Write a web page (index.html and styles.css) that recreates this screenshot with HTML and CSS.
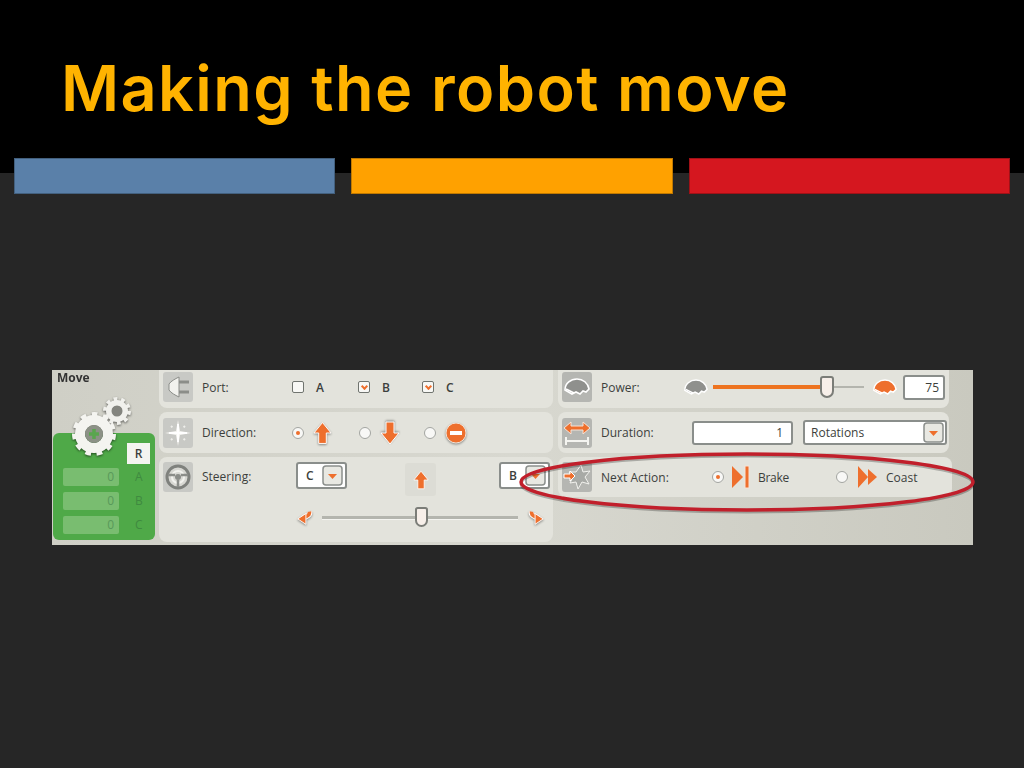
FILE: index.html
```html
<!DOCTYPE html>
<html lang="en">
<head>
    <meta charset="UTF-8">
    <title>Making the robot move</title>
    <link rel="stylesheet" href="styles.css">
</head>
<body>
    <svg class="defs" width="0" height="0">
        <symbol id="arrow" viewBox="0 0 20 24"><path d="M10 1 19 12H14V23H6V12H1Z" fill="#ee6f2d" stroke="#fff" stroke-width="1"/></symbol>
        <symbol id="fan" viewBox="0 0 28 20"><path d="M2 13C2 6 8 2 14 2 20 2 25 6 26 12L23 15 20 14 17 17 13 15 9 17Z" stroke="#fff" stroke-width="1.6"/><path d="M3 12 11 16" stroke="#fff" stroke-width="1.6"/></symbol>
        <symbol id="dropdown" viewBox="0 0 21 21"><rect x="1" y="1" width="19" height="19" rx="3" fill="#e8e8e2" stroke="#8b8f8c" stroke-width="1.5"/><path d="M6 9H15L10.5 14Z" fill="#ee6f2d"/></symbol>
        <symbol id="curve" viewBox="0 0 20 20"><path d="M15 3C16 8 11 8 8 10" fill="none" stroke="#fff" stroke-width="6"/><path d="M15 3C16 8 11 8 8 10" fill="none" stroke="#ee6f2d" stroke-width="4"/><path d="M2 11 11 5 11 17Z" fill="#ee6f2d" stroke="#fff"/></symbol>
    </svg>

    <header class="title-bar">
        <h1>Making the robot move</h1>
    </header>
    <div class="stripes">
        <div class="stripe blue"></div>
        <div class="stripe orange"></div>
        <div class="stripe red"></div>
    </div>

    <main class="panel">
        <section class="block-side">
            <div class="block-name">Move</div>
            <div class="green">
                <div class="reset">R</div>
                <div class="feedback"><span class="count">0</span><span class="port-letter">A</span></div>
                <div class="feedback"><span class="count">0</span><span class="port-letter">B</span></div>
                <div class="feedback"><span class="count">0</span><span class="port-letter">C</span></div>
            </div>
            <svg class="gears" width="100" height="70" viewBox="0 0 100 70">
                <circle cx="65" cy="14" r="8" fill="none" stroke="#f0f0ec" stroke-width="6"/>
                <circle cx="65" cy="14" r="12" fill="none" stroke="#f0f0ec" stroke-width="4" stroke-dasharray="3.77 3.77"/>
                <circle cx="65" cy="14" r="5.5" fill="#83847e"/>
                <circle cx="42" cy="37" r="14" fill="none" stroke="#f4f4f0" stroke-width="10"/>
                <circle cx="42" cy="37" r="19.5" fill="none" stroke="#f4f4f0" stroke-width="5" stroke-dasharray="5.57 5.57"/>
                <circle cx="42" cy="37" r="9" fill="#8c9186"/>
                <path d="M42 32V42M37 37H47" stroke="#5aa54f" stroke-width="3.5"/>
            </svg>
        </section>

        <section class="col col-left">
            <div class="row row-port">
                <div class="tile">
                    <svg width="26" height="26" viewBox="0 0 26 26"><path d="M14 8H24M14 18H24" stroke="#8b8d89" stroke-width="3"/><path d="M4 10C6 7 10 5 14 3V23C10 21 6 19 4 16Z" fill="#f2f2ee" stroke="#8b8d89"/></svg>
                </div>
                <span class="label label-left">Port:</span>
                <span class="check"></span><span class="opt opt-a">A</span>
                <span class="check on"></span><span class="opt opt-b">B</span>
                <span class="check on"></span><span class="opt">C</span>
            </div>
            <div class="row row-dir">
                <div class="tile">
                    <svg width="28" height="28" viewBox="0 0 28 28"><path d="M14 1 16 12 27 14 16 16 14 27 12 16 1 14 12 12Z" fill="#f4f4f0"/><path d="M14 5V23M5 14H23" stroke="#fff" stroke-width="2"/><path d="M7 7 9 9M21 7 19 9M7 21 9 19M21 21 19 19" stroke="#eeeeea" stroke-width="2" stroke-dasharray="2 1"/></svg>
                </div>
                <span class="label label-left">Direction:</span>
                <span class="radio on"></span>
                <svg class="dir-icon" width="19" height="24"><use href="#arrow"/></svg>
                <span class="radio radio-down"></span>
                <svg class="dir-icon flip" width="20" height="24"><use href="#arrow"/></svg>
                <span class="radio radio-stop"></span>
                <svg class="dir-icon" width="22" height="22" viewBox="0 0 22 22"><circle cx="11" cy="11" r="10" fill="#ee6f2d" stroke="#f3e1d4"/><rect x="5" y="9" width="12" height="4" fill="#fff"/></svg>
            </div>
            <div class="row row-steer">
                <div class="steer-top">
                    <div class="tile">
                        <svg width="28" height="28" viewBox="0 0 28 28"><circle cx="14" cy="14" r="11" fill="#d8d8d3" stroke="#7f817d" stroke-width="3"/><circle cx="14" cy="14" r="6" fill="none" stroke="#f2f2ee" stroke-width="2"/><circle cx="14" cy="14" r="3" fill="#8b8d89"/><path d="M4 12H11M17 12H24M14 17V24" stroke="#8b8d89" stroke-width="2.5"/></svg>
                    </div>
                    <span class="label label-left">Steering:</span>
                    <div class="port-select port-c"><span>C</span><svg width="21" height="21"><use href="#dropdown"/></svg></div>
                    <div class="steer-arrow"><svg width="16" height="22"><use href="#arrow"/></svg></div>
                    <div class="port-select"><span>B</span><svg width="21" height="21"><use href="#dropdown"/></svg></div>
                </div>
                <div class="steer-slider">
                    <svg width="18" height="18"><use href="#curve"/></svg>
                    <div class="track"><span class="thumb"></span></div>
                    <svg class="mirror" width="18" height="18"><use href="#curve"/></svg>
                </div>
            </div>
        </section>

        <section class="col col-right">
            <div class="row row-power">
                <div class="tile tile-dark">
                    <svg width="28" height="22" class="fan-grey"><use href="#fan"/></svg>
                </div>
                <span class="label label-right">Power:</span>
                <svg class="fan-grey" width="26" height="19"><use href="#fan"/></svg>
                <div class="power-track"><span class="power-fill"></span><span class="thumb"></span></div>
                <svg class="fan-orange" width="26" height="19"><use href="#fan"/></svg>
                <div class="input input-power">75</div>
            </div>
            <div class="row row-duration">
                <div class="tile tile-dark">
                    <svg width="28" height="28" viewBox="0 0 28 28"><path d="M1 9 8 3V7H20V3L27 9 20 15V11H8V15Z" fill="#ee6f2d" stroke="#f7e3d6"/><path d="M3 26V18M25 26V18M3 22H25" stroke="#f4f4f0" stroke-width="2"/></svg>
                </div>
                <span class="label label-right">Duration:</span>
                <div class="input input-duration">1</div>
                <div class="input select-unit"><span>Rotations</span><svg width="21" height="21"><use href="#dropdown"/></svg></div>
            </div>
            <div class="row row-next">
                <div class="tile tile-dark">
                    <svg width="28" height="26" viewBox="0 0 28 26"><path d="M18 1 20 8 27 7 22 13 26 20 19 18 15 25 13 18 7 19 10 13 6 8 13 8Z" fill="#a8aaa6" stroke="#f2f2ee"/><path d="M1 10H7V7L12 12 7 17V14H1Z" fill="#ee6f2d" stroke="#fff"/></svg>
                </div>
                <span class="label label-right">Next Action:</span>
                <span class="radio on"></span>
                <svg class="act-icon" width="19" height="24" viewBox="0 0 19 24"><path d="M1 1 12 12 1 23Z" fill="#ee6f2d"/><rect x="14" y="1" width="4" height="22" fill="#ee6f2d" stroke="#f6e3d6"/></svg>
                <span class="act-text text-brake">Brake</span>
                <span class="radio"></span>
                <svg class="act-icon act-coast" width="21" height="24" viewBox="0 0 21 24"><path d="M1 1 11 12 1 23ZM11 4 20 12 11 20Z" fill="#ee6f2d"/></svg>
                <span class="act-text">Coast</span>
            </div>
        </section>

        <svg class="circle-mark" width="470" height="70" viewBox="0 0 470 70">
            <ellipse cx="235" cy="36" rx="226" ry="28" fill="none" stroke="#000" stroke-opacity=".25" stroke-width="3"/>
            <ellipse cx="235" cy="34" rx="226" ry="28" fill="none" stroke="#c11f2b" stroke-width="3.5"/>
        </svg>
    </main>
</body>
</html>
```

FILE: styles.css
```css
body {
    margin: 0;
    width: 1024px;
    height: 768px;
    overflow: hidden;
    background-color: #262626;
    font-family: "Open Sans", "Liberation Sans", sans-serif;
    color: #3c3f3c;
}

.defs {
    display: block;
}

.title-bar {
    height: 173px;
    background-color: #000;
    display: flex;
    align-items: flex-start;
    box-sizing: border-box;
    padding: 50px 0 0 61px;
}

h1 {
    margin: 0;
    font-family: "Inter", "Liberation Sans", sans-serif;
    font-size: 63px;
    line-height: 76px;
    font-weight: 600;
    color: #ffb300;
    letter-spacing: 1.4px;
}

.stripes {
    display: flex;
    gap: 16px;
    margin: -15px 14px 0;
}

.stripe {
    width: 322px;
    height: 36px;
    box-sizing: border-box;
    border: 1px solid rgba(0, 0, 0, 0.25);
}

.blue { background-color: #5a80a9; }
.orange { background-color: #ffa100; }
.red { background-color: #d5171f; }

.panel {
    position: relative;
    display: flex;
    width: 921px;
    height: 175px;
    margin: 176px 0 0 52px;
    background: linear-gradient(90deg, #cfcfc6, #d8d8d0 50%, #c9c9bf);
    font-size: 12px;
    filter: blur(0.45px);
}

.block-side {
    position: relative;
    width: 107px;
    flex: none;
}

.block-name {
    padding: 0 0 0 5px;
    font-size: 12px;
    font-weight: 700;
    line-height: 15px;
    color: #333;
}

.gears {
    position: absolute;
    left: 0;
    top: 27px;
    filter: drop-shadow(0 1px 1px rgba(0, 0, 0, 0.55));
}

.green {
    position: absolute;
    left: 1px;
    top: 63px;
    width: 102px;
    height: 107px;
    box-sizing: border-box;
    padding: 10px 0 0 10px;
    border-radius: 6px;
    background-color: #4fa948;
}

.reset {
    position: relative;
    z-index: 1;
    width: 23px;
    height: 21px;
    margin: 0 0 4px 64px;
    background-color: #f4f4f0;
    font-size: 12px;
    font-weight: 600;
    line-height: 21px;
    text-align: center;
}

.feedback {
    display: flex;
    margin-bottom: 6px;
    line-height: 18px;
}

.count {
    width: 56px;
    height: 18px;
    box-sizing: border-box;
    padding-right: 5px;
    background-color: #79bd70;
    border-radius: 2px;
    text-align: right;
    color: #58995a;
}

.port-letter {
    margin-left: 16px;
    color: #3f8a40;
}

.col {
    display: flex;
    flex-direction: column;
    gap: 4px;
    flex: none;
}

.col-left {
    width: 394px;
    margin-right: 5px;
}

.col-right {
    width: 391px;
}

.row {
    display: flex;
    align-items: center;
    box-sizing: border-box;
    padding-left: 4px;
    background-color: #e3e3dc;
    border-radius: 0 0 8px 8px;
}

.row-port, .row-power {
    height: 38px;
    padding-bottom: 4px;
}

.row-dir, .row-duration {
    height: 41px;
    border-radius: 8px;
}

.row-steer {
    display: block;
    height: 85px;
    padding-top: 5px;
    border-radius: 8px;
}

.row-next {
    height: 40px;
    border-radius: 8px;
    margin-right: -3px;
}

.tile {
    display: flex;
    align-items: center;
    justify-content: center;
    width: 30px;
    height: 30px;
    flex: none;
    background-color: #c8c9c5;
    border-radius: 3px;
}

.tile-dark {
    background-color: #b5b6b2;
}

.label {
    margin-left: 9px;
    flex: none;
}

.label-left {
    width: 90px;
}

.label-right {
    width: 0;
    white-space: nowrap;
}

.check {
    width: 12px;
    height: 12px;
    flex: none;
    box-sizing: border-box;
    border: 1.5px solid #70746f;
    border-radius: 2px;
    background-color: #f8f8f5;
    display: flex;
    align-items: center;
    justify-content: center;
}

.check.on::after {
    content: "";
    width: 3px;
    height: 3px;
    border-right: 2px solid #ee6f2d;
    border-bottom: 2px solid #ee6f2d;
    transform: translateY(-1px) rotate(45deg);
}

.opt {
    margin-left: 12px;
    font-weight: 600;
    font-size: 12px;
    width: 9px;
}

.opt-a {
    width: 42px;
}

.opt-b {
    width: 40px;
}

.radio {
    width: 12px;
    height: 12px;
    flex: none;
    box-sizing: border-box;
    border: 1px solid #a3a5a1;
    border-radius: 50%;
    background-color: #f8f8f6;
    display: flex;
    align-items: center;
    justify-content: center;
}

.radio.on::after {
    content: "";
    width: 4px;
    height: 4px;
    border-radius: 50%;
    background-color: #ee6f2d;
}

.dir-icon {
    margin-left: 9px;
    flex: none;
    filter: drop-shadow(0 1px 1px rgba(0, 0, 0, 0.4));
}

.flip {
    transform: rotate(180deg);
}

.radio-down {
    margin-left: 27px;
}

.radio-stop {
    margin-left: 24px;
}

.steer-top {
    display: flex;
    align-items: flex-start;
}

.steer-top .label {
    line-height: 30px;
}

.port-select {
    display: flex;
    align-items: center;
    justify-content: space-between;
    width: 51px;
    height: 27px;
    flex: none;
    box-sizing: border-box;
    padding: 0 2px 0 8px;
    background-color: #fff;
    border: 2px solid #8a8e8b;
    border-radius: 3px;
    font-weight: 600;
}

.port-c {
    margin-left: 4px;
}

.steer-arrow {
    display: flex;
    align-items: center;
    justify-content: center;
    width: 31px;
    height: 33px;
    flex: none;
    margin: 1px 63px 0 58px;
    background-color: #dcdcd5;
    border-radius: 3px;
}

.steer-slider {
    display: flex;
    align-items: center;
    margin: 13px 0 0 133px;
}

.steer-slider svg {
    filter: drop-shadow(0 1px 1px rgba(0, 0, 0, 0.4));
}

.track {
    position: relative;
    width: 196px;
    height: 3px;
    margin: 0 9px 0 8px;
    background-color: #b4b5ae;
    border-bottom: 1px solid #f4f4f0;
}

.thumb {
    position: absolute;
    left: 93px;
    top: -9px;
    width: 13px;
    height: 20px;
    box-sizing: border-box;
    border: 2px solid #7b7d78;
    border-radius: 3px 3px 7px 7px;
    background-color: #f7efe9;
}

.mirror {
    transform: scaleX(-1);
}

.fan-grey {
    fill: #8f908d;
    flex: none;
}

.fan-orange {
    fill: #ee6f2d;
    flex: none;
}

.row-power > .fan-grey {
    margin-left: 82px;
}

.power-track {
    position: relative;
    width: 151px;
    height: 2px;
    margin: 0 8px 0 4px;
    background-color: #b4b5ae;
    flex: none;
}

.power-fill {
    position: absolute;
    left: 0;
    top: -1px;
    width: 111px;
    height: 4px;
    background-color: #ee7420;
}

.power-track .thumb {
    left: 107px;
    top: -10px;
    width: 14px;
    height: 22px;
}

.input {
    display: flex;
    align-items: center;
    justify-content: flex-end;
    box-sizing: border-box;
    background-color: #fff;
    border: 2px solid #8a8e8b;
    border-radius: 3px;
    flex: none;
}

.input-power {
    width: 42px;
    height: 25px;
    margin-left: 5px;
    padding-right: 4px;
}

.input-duration {
    width: 101px;
    height: 24px;
    margin-left: 91px;
    padding-right: 8px;
}

.select-unit {
    justify-content: space-between;
    width: 144px;
    height: 25px;
    margin-left: 10px;
    padding: 0 1px 0 6px;
}

.row-next > .radio {
    margin-left: 111px;
}

.row-next > .radio ~ .radio {
    margin-left: 0;
}

.act-icon {
    margin-left: 7px;
    flex: none;
}

.act-coast {
    margin-left: 9px;
}

.act-text {
    margin-left: 8px;
}

.text-brake {
    width: 78px;
    letter-spacing: -0.3px;
}

.circle-mark {
    position: absolute;
    left: 460px;
    top: 78px;
}
```
